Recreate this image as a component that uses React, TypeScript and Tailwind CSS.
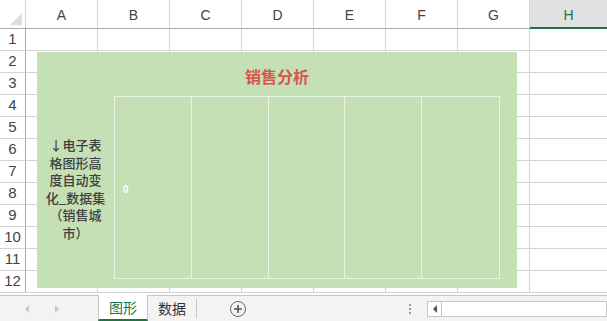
import React from "react";

const cols = ["A", "B", "C", "D", "E", "F", "G"];
const rows = Array.from({ length: 12 }, (_, i) => i + 1);
const leftLines = ["↓电子表", "格图形高", "度自动变", "化_数据集", "（销售城", "市）"];

export default function App() {
  return (
    <div
      className="relative w-[607px] h-[321px] overflow-hidden bg-white"
      style={{ fontFamily: '"Liberation Sans", "Noto Sans CJK SC", sans-serif' }}
    >
      {/* header row */}
      <div className="flex h-[29px] border-b border-[#ababab]">
        <div className="relative w-[26px] shrink-0 border-r border-[#d4d4d4]">
          <div className="absolute right-[3px] bottom-[3px] w-0 h-0 border-l-[12px] border-l-transparent border-b-[12px] border-b-[#dcdcdc]" />
        </div>
        {cols.map((c) => (
          <div
            key={c}
            className="w-[72px] shrink-0 border-r border-[#d4d4d4] flex items-center justify-center text-[14px] text-[#444] pt-[3px]"
          >
            {c}
          </div>
        ))}
        <div className="flex-1 -mb-px bg-[#e1e1e1] border-b-[2px] border-[#217346] flex items-center justify-center text-[14px] text-[#217346] pt-[3px]">
          H
        </div>
      </div>
      {/* rows */}
      {rows.map((r) => (
        <div key={r} className="flex h-[22px] border-b border-[#d4d4d4]">
          <div className="w-[26px] shrink-0 border-r border-[#ababab] flex items-center justify-center text-[15px] text-[#444]">
            {r}
          </div>
          {cols.map((c) => (
            <div key={c} className="w-[72px] shrink-0 border-r border-[#d4d4d4]" />
          ))}
          <div className="flex-1" />
        </div>
      ))}
      {/* tab bar */}
      <div className="absolute left-0 right-0 top-[295px] bottom-0 bg-[#f3f3f3] border-t border-[#c6c6c6] flex items-stretch">
        <div className="w-[98px] flex items-center">
          <div className="ml-[25px] w-0 h-0 border-r-[4px] border-r-[#c8c8c8] border-y-[4px] border-y-transparent" />
          <div className="ml-[26px] w-0 h-0 border-l-[4px] border-l-[#c8c8c8] border-y-[4px] border-y-transparent" />
        </div>
        <div
          className="w-[50px] -mt-px bg-white border-x border-[#c6c6c6] border-b-[2px] border-b-[#217346] flex items-center justify-center text-[14px] text-[#217346]"
          style={{ fontFamily: '"Noto Sans CJK SC", sans-serif' }}
        >
          图形
        </div>
        <div
          className="w-[49px] border-r border-[#c6c6c6] my-[3px] flex items-center justify-center text-[14px] text-[#333]"
          style={{ fontFamily: '"Noto Sans CJK SC", sans-serif' }}
        >
          数据
        </div>
        <div className="w-[82px] flex items-center justify-center">
          <div className="w-[16px] h-[16px] rounded-full border border-[#666] flex items-center justify-center">
            <svg width="10" height="10" viewBox="0 0 10 10">
              <path d="M5 1v8M1 5h8" stroke="#555" strokeWidth="1.6" />
            </svg>
          </div>
        </div>
        <div className="w-[148px] flex items-center justify-end pr-[16px]">
          <div className="flex flex-col gap-[2px]">
            <div className="w-[2px] h-[2px] bg-[#9a9a9a]" />
            <div className="w-[2px] h-[2px] bg-[#9a9a9a]" />
            <div className="w-[2px] h-[2px] bg-[#9a9a9a]" />
          </div>
        </div>
        <div className="flex-1 flex items-center">
          <div className="flex h-[16px] w-full border border-[#c6c6c6] bg-white">
            <div className="w-[14px] border-r border-[#c6c6c6] flex items-center justify-center">
              <div className="w-0 h-0 border-r-[4px] border-r-[#555] border-y-[4px] border-y-transparent" />
            </div>
            <div className="flex-1" />
          </div>
        </div>
      </div>
      {/* chart */}
      <div className="absolute left-[37px] top-[52px] w-[480px] h-[236px] bg-[#c5e0b4] flex flex-col">
        <div
          className="h-[44px] flex items-center justify-center pt-[4px] text-[16px] font-bold text-[#d9534f]"
          style={{ fontFamily: '"Noto Sans CJK SC", sans-serif' }}
        >
          销售分析
        </div>
        <div className="flex flex-1 pb-[9px] pr-[17px]">
          <div className="w-[77px] flex items-center justify-center pt-[2px]">
            <div
              className="text-center text-[13px] leading-[17.5px] text-[#404040] font-medium whitespace-nowrap"
              style={{ fontFamily: '"Noto Sans CJK SC", sans-serif' }}
            >
              {leftLines.map((l) => (
                <div key={l}>{l}</div>
              ))}
            </div>
          </div>
          <div className="relative flex-1 grid grid-cols-5 border border-[#e9f3e2]">
            {[0, 1, 2, 3, 4].map((i) => (
              <div key={i} className={i < 4 ? "border-r border-[#e9f3e2]" : ""} />
            ))}
            <div className="absolute left-[8px] top-[85px] text-[10px] font-bold text-white">0</div>
          </div>
        </div>
      </div>
    </div>
  );
}
